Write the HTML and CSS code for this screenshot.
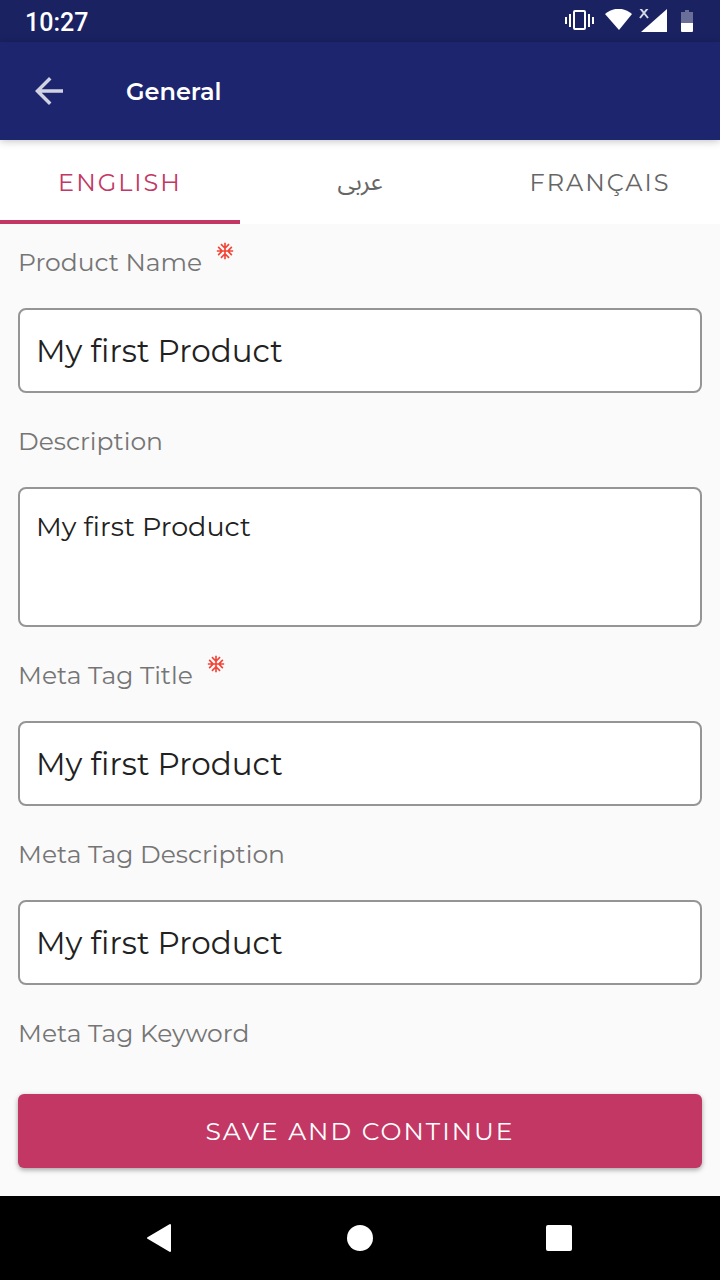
FILE: index.html
```html
<!DOCTYPE html>
<html lang="en">
<head>
    <meta charset="UTF-8">
    <meta name="viewport" content="width=device-width, initial-scale=1.0">
    <title>General</title>
    <link rel="stylesheet" href="styles.css">
</head>
<body>
    <div class="status-bar">
        <span class="clock">10:27</span>
        <svg class="status-icons" width="130" height="28" viewBox="0 3 130 28" fill="#fff" aria-hidden="true">
            <!-- vibrate -->
            <path d="M0 11h2v7H0zM4 8h2v13H4zM23 8h2v13h-2zM27 11h2v7h-2z"/>
            <rect x="9" y="5" width="11" height="18" rx="1" fill="none" stroke="#fff" stroke-width="2"/>
            <!-- wifi -->
            <path d="M40 8C48 1 59 1 67 8L54 24z"/>
            <!-- no signal -->
            <path d="M102 3v23H76z"/>
            <path d="M75 2l8 10M83 2l-8 10" stroke="#d6d8e6" stroke-width="2"/>
            <!-- battery -->
            <path d="M116 6h4V4h4v2h4v11h-12z" opacity=".35"/>
            <path d="M116 17h12v8q0 1-1 1h-10q-1 0-1-1z"/>
        </svg>
    </div>
    <header class="app-bar">
        <button class="back" type="button" aria-label="Back">
            <svg width="42" height="42" viewBox="0 0 24 24"><path d="M20 11H7.83l5.59-5.59L12 4l-8 8 8 8 1.41-1.41L7.83 13H20v-2z"/></svg>
        </button>
        <h1>General</h1>
    </header>
    <div class="tabs" role="tablist">
        <button class="tab active" type="button" role="tab" aria-selected="true">ENGLISH</button>
        <button class="tab arabic" type="button" role="tab" aria-selected="false" lang="ar">عربی</button>
        <button class="tab" type="button" role="tab" aria-selected="false">FRANÇAIS</button>
    </div>
    <form class="product-form" id="product-form">
        <div class="field">
            <label for="name">Product Name
                <svg class="required" width="18" height="18" viewBox="1 1 22 22" aria-hidden="true"><path d="M22 11h-4.17l3.24-3.24-1.41-1.42L15 11h-2V9l4.66-4.66-1.42-1.41L13 6.17V2h-2v4.17L7.76 2.93 6.34 4.34 11 9v2H9L4.34 6.34 2.93 7.76 6.17 11H2v2h4.17l-3.24 3.24 1.41 1.42L9 13h2v2l-4.66 4.66 1.42 1.41L11 17.83V22h2v-4.17l3.24 3.24 1.42-1.41L13 15v-2h2l4.66 4.66 1.41-1.42L17.83 13H22z"/></svg>
            </label>
            <input id="name" type="text" value="My first Product" required>
        </div>
        <div class="field">
            <label for="description">Description</label>
            <textarea id="description">My first Product</textarea>
        </div>
        <div class="field">
            <label for="meta-title">Meta Tag Title
                <svg class="required" width="18" height="18" viewBox="1 1 22 22" aria-hidden="true"><path d="M22 11h-4.17l3.24-3.24-1.41-1.42L15 11h-2V9l4.66-4.66-1.42-1.41L13 6.17V2h-2v4.17L7.76 2.93 6.34 4.34 11 9v2H9L4.34 6.34 2.93 7.76 6.17 11H2v2h4.17l-3.24 3.24 1.41 1.42L9 13h2v2l-4.66 4.66 1.42 1.41L11 17.83V22h2v-4.17l3.24 3.24 1.42-1.41L13 15v-2h2l4.66 4.66 1.41-1.42L17.83 13H22z"/></svg>
            </label>
            <input id="meta-title" type="text" value="My first Product" required>
        </div>
        <div class="field">
            <label for="meta-description">Meta Tag Description</label>
            <input id="meta-description" type="text" value="My first Product">
        </div>
        <div class="field">
            <label for="meta-keyword">Meta Tag Keyword</label>
            <input id="meta-keyword" type="text">
        </div>
    </form>
    <div class="actions">
        <button class="save" type="submit" form="product-form">SAVE AND CONTINUE</button>
    </div>
    <nav class="nav-bar">
        <button type="button" aria-label="Back">
            <svg width="28" height="30" viewBox="0 0 28 30"><path d="M24 2v26L2 15z" stroke="#fff" stroke-width="2" stroke-linejoin="round"/></svg>
        </button>
        <button type="button" aria-label="Home">
            <svg width="28" height="28" viewBox="0 0 28 28"><circle cx="14" cy="14" r="13"/></svg>
        </button>
        <button type="button" aria-label="Recent apps">
            <svg width="28" height="28" viewBox="1 0 28 28"><rect x="1" y="1" width="26" height="26" rx="2"/></svg>
        </button>
    </nav>
</body>
</html>
```
FILE: styles.css
```css
* {
    box-sizing: border-box;
}

body {
    margin: 0;
    height: 100vh;
    display: flex;
    flex-direction: column;
    background: #fafafa;
    font-family: Montserrat, Inter, "Noto Sans", sans-serif;
}

button, input, textarea {
    font-family: inherit;
    margin: 0;
}

button {
    border: 0;
    padding: 0;
    background: none;
}

svg {
    display: block;
}

.status-bar {
    flex: none;
    height: 42px;
    padding: 4px 25px 0;
    display: flex;
    align-items: center;
    justify-content: space-between;
    background: #1a2262;
    color: #fff;
}

.clock {
    font: 500 25px/30px Roboto, sans-serif;
}

.app-bar {
    flex: none;
    height: 98px;
    padding: 0 28px;
    display: flex;
    align-items: center;
    gap: 56px;
    background: #1d256f;
    color: #fff;
    box-shadow: 0 1px 8px rgba(0, 0, 0, 0.25);
    z-index: 1;
}

.back {
    fill: #d2d3e2;
}

h1 {
    margin: 0;
    font-size: 24px;
    font-weight: 600;
}

.tabs {
    flex: none;
    display: grid;
    grid-template-columns: repeat(3, 1fr);
    background: #fff;
}

.tab {
    height: 84px;
    border-top: 4px solid transparent;
    border-bottom: 4px solid transparent;
    color: #666;
    font-size: 24px;
    letter-spacing: 2px;
}

.tab.active {
    color: #c33764;
    border-bottom-color: #c33764;
}

.tab.arabic {
    font-family: "Noto Sans Arabic", "DejaVu Sans", sans-serif;
    letter-spacing: normal;
}

.product-form {
    flex: 1 1 0;
    min-height: 0;
    overflow-y: auto;
    scrollbar-width: none;
    padding: 18px 18px 0;
    display: flex;
    flex-direction: column;
    gap: 28px;
}

.field {
    flex: none;
    display: flex;
    flex-direction: column;
    gap: 26px;
}

label {
    display: flex;
    gap: 14px;
    color: #757575;
    font-size: 25px;
    line-height: 40px;
}

.required {
    fill: #f44336;
}

input, textarea {
    width: 100%;
    border: 2px solid #959595;
    border-radius: 8px;
    background: #fff;
    color: #212121;
    padding: 0 16px;
}

input {
    height: 85px;
    font-size: 31px;
}

textarea {
    display: block;
    height: 140px;
    padding-top: 20px;
    font-size: 27px;
    line-height: 36px;
    resize: none;
}

.actions {
    flex: none;
    padding: 18px 18px 28px;
}

.save {
    display: block;
    width: 100%;
    height: 74px;
    border-radius: 6px;
    background: #c33764;
    color: #fff;
    font-size: 25px;
    letter-spacing: 2px;
    box-shadow: 0 2px 5px rgba(0, 0, 0, 0.35);
}

.nav-bar {
    flex: none;
    height: 84px;
    padding: 0 60px;
    display: grid;
    grid-template-columns: repeat(3, 1fr);
    background: #000;
}

.nav-bar button {
    display: flex;
    align-items: center;
    justify-content: center;
    fill: #fff;
}
```
